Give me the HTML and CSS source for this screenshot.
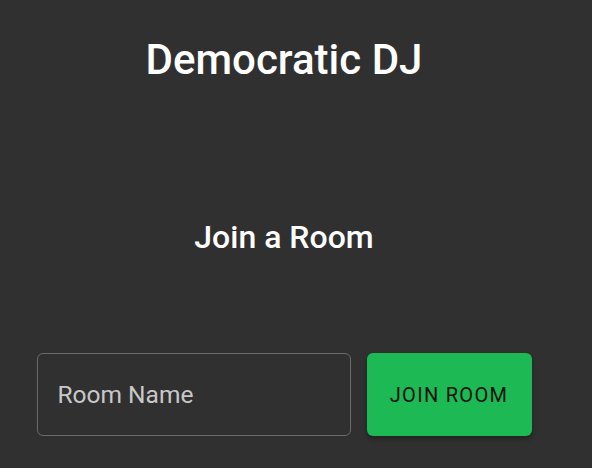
FILE: index.html
```html
<!DOCTYPE html>
<html>
<head>
<meta charset="utf-8">
<link rel="stylesheet" href="styles.css">
</head>
<body>
<div class="page">
  <h1 class="title">Democratic DJ</h1>
  <h2 class="subtitle">Join a Room</h2>
  <div class="form-row">
    <div class="field"><span class="placeholder">Room Name</span></div>
    <button class="join">JOIN ROOM</button>
  </div>
</div>
</body>
</html>
```
FILE: styles.css
```css
html, body {
  margin: 0;
  padding: 0;
  background: #303030;
  height: 100%;
}
.page {
  width: 568px;
  font-family: Roboto, "Noto Sans", sans-serif;
  color: #fff;
  display: flex;
  flex-direction: column;
  align-items: center;
}
.title {
  margin: 35px 0 0;
  font-size: 42px;
  font-weight: 500;
  line-height: 50px;
}
.subtitle {
  margin: 134px 0 0;
  font-size: 32px;
  font-weight: 500;
  line-height: 36px;
}
.form-row {
  margin-top: 98px;
  display: flex;
  gap: 16px;
}
.field {
  box-sizing: border-box;
  width: 314px;
  height: 83px;
  border: 1px solid #6a6a6a;
  border-radius: 6px;
  display: flex;
  align-items: center;
  padding-left: 20px;
}
.placeholder {
  font-size: 24.5px;
  color: #c8c8c8;
}
.join {
  width: 165px;
  height: 83px;
  border: none;
  border-radius: 6px;
  background: #1db954;
  color: #111;
  font-family: Roboto, sans-serif;
  font-size: 20px;
  font-weight: 400;
  letter-spacing: 1.3px;
  box-shadow: 0 3px 4px rgba(0,0,0,0.3);
}
```
